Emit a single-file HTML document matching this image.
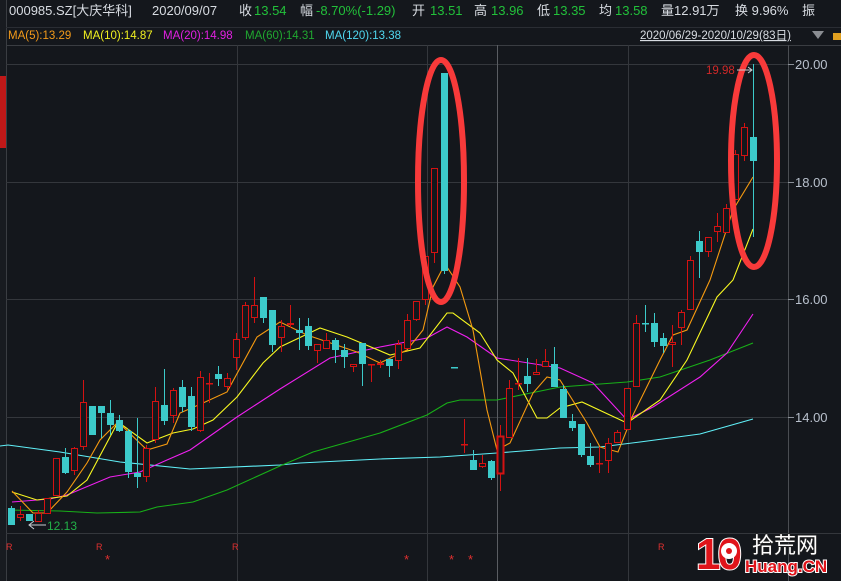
<!DOCTYPE html>
<html><head><meta charset="utf-8">
<style>
html,body{margin:0;padding:0;background:#14171c;width:841px;height:581px;overflow:hidden}
svg{display:block}
text{font-family:"Liberation Sans","Noto Sans CJK SC",sans-serif}
</style></head><body>
<svg id="s" width="841" height="581" viewBox="0 0 841 581" xmlns="http://www.w3.org/2000/svg">
<rect width="841" height="581" fill="#14171c"/>
<rect x="0" y="0" width="6" height="581" fill="#181b20"/>
<rect x="0" y="76" width="6" height="72" fill="#c01818"/>
<line x1="6.5" y1="0" x2="6.5" y2="581" stroke="#3a3d42"/>
<line x1="6" y1="27.5" x2="841" y2="27.5" stroke="#2a2d33"/>
<line x1="6" y1="45.5" x2="841" y2="45.5" stroke="#3a3d42"/>
<g stroke="#34373c" stroke-width="1">
<line x1="6" y1="64.5" x2="788" y2="64.5"/>
<line x1="6" y1="182.5" x2="788" y2="182.5"/>
<line x1="6" y1="299.5" x2="788" y2="299.5"/>
<line x1="6" y1="417.5" x2="788" y2="417.5"/>
<line x1="6" y1="533.5" x2="841" y2="533.5"/>
<line x1="237.5" y1="45" x2="237.5" y2="581"/>
<line x1="427.5" y1="45" x2="427.5" y2="581"/>
<line x1="628.5" y1="45" x2="628.5" y2="581"/>
</g>
<line x1="497.5" y1="45" x2="497.5" y2="581" stroke="#5a5d62"/>
<line x1="788.5" y1="45" x2="788.5" y2="581" stroke="#4a4d52"/>
<g stroke="#8a9098"><line x1="788" y1="64.5" x2="794" y2="64.5"/><line x1="788" y1="182.5" x2="794" y2="182.5"/><line x1="788" y1="299.5" x2="794" y2="299.5"/><line x1="788" y1="417.5" x2="794" y2="417.5"/></g>
<g fill="#b8c0cc" font-size="13">
<text x="795" y="69">20.00</text><text x="795" y="187">18.00</text><text x="795" y="304">16.00</text><text x="795" y="422">14.00</text>
</g>
<g font-size="13" fill="#d8dce2">
<text x="9" y="15">000985.SZ[大庆华科]</text>
<text x="152" y="15">2020/09/07</text>
<text x="239" y="15">收</text><text x="254" y="15" fill="#22c03a">13.54</text>
<text x="300" y="15">幅</text><text x="316" y="15" fill="#22c03a">-8.70%(-1.29)</text>
<text x="412" y="15">开</text><text x="430" y="15" fill="#22c03a">13.51</text>
<text x="474" y="15">高</text><text x="491" y="15" fill="#22c03a">13.96</text>
<text x="537" y="15">低</text><text x="553" y="15" fill="#22c03a">13.35</text>
<text x="599" y="15">均</text><text x="615" y="15" fill="#22c03a">13.58</text>
<text x="661" y="15">量12.91万</text>
<text x="735" y="15">换 9.96%</text>
<text x="802" y="15">振</text>
</g>
<g font-size="11.5">
<text x="8" y="39" fill="#f39a1a">MA(5):13.29</text>
<text x="83" y="39" fill="#f0f020">MA(10):14.87</text>
<text x="163" y="39" fill="#e020e0">MA(20):14.98</text>
<text x="245" y="39" fill="#20a830">MA(60):14.31</text>
<text x="325" y="39" fill="#50d8f0">MA(120):13.38</text>
<text x="640" y="39" fill="#d8dce2" text-decoration="underline">2020/06/29-2020/10/29(83日)</text>
</g>
<polygon points="812,31 824,31 818,39" fill="#8a8d92"/>
<rect x="833" y="33" width="8" height="7" fill="#e0a020"/>
<g fill="none" stroke-width="1.1">
<polyline stroke="#60f0f8" points="0,446 8,445 60,452 120,462 190,469 280,465 300,463 380,459 440,457 497,453 560,448 600,447 640,442 700,434 753,419"/>
<polyline stroke="#18b018" points="8,510 60,511 97,513 140,512 157,507 193,502 227,490 280,466 313,452 380,433 427,415 447,403 460,400 497,400 560,387 627,382 660,377 710,360 753,343"/>
<polyline stroke="#f020f0" points="12,502 50,499 67,495 110,477 140,472 167,460 190,450 237,417 280,389 330,358 380,347 427,338 447,327 467,337 497,358 560,368 593,383 627,420 653,407 700,377 727,353 753,314"/>
<polyline stroke="#f8f820" points="12,492 37,500 67,496 87,480 118,422 147,443 173,433 193,429 213,420 237,397 263,363 280,347 320,328 347,337 390,355 420,348 447,313 453,313 480,333 497,360 513,373 537,418 547,418 560,408 582,402 627,423 660,400 687,360 717,297 733,280 753,229"/>
<polyline stroke="#f59a10" points="12,491 33,513 47,513 67,492 87,463 100,440 118,422 147,450 167,444 180,413 203,403 227,392 257,337 280,322 307,335 357,352 380,363 407,350 423,330 433,287 445,264 460,287 473,330 487,410 497,450 510,443 533,393 547,377 560,380 587,423 600,447 618,452 632,417 660,360 673,335 687,330 710,280 733,210 753,177"/>
</g>
<g id="c"></g>
<ellipse cx="441" cy="181" rx="23" ry="121" fill="none" stroke="#f83a3a" stroke-width="6"/>
<ellipse cx="754" cy="161" rx="23" ry="106" fill="none" stroke="#f83a3a" stroke-width="6"/>
<text x="706" y="74" font-size="11.5" fill="#d02828">19.98</text>
<path d="M737 70 H752 M748 67 L752 70 L748 73" stroke="#c8ccd2" fill="none"/>
<path d="M30 525 H46 M34 521 L29 525 L34 529" stroke="#c8ccd2" fill="none"/>
<text x="47" y="530" font-size="12" fill="#22b048">12.13</text>
<g font-size="9" fill="#e03030">
<text x="6" y="550">R</text><text x="96" y="550">R</text><text x="232" y="550">R</text><text x="658" y="550">R</text>
</g>
<g font-size="13" fill="#e03030">
<text x="105" y="564">*</text><text x="404" y="564">*</text><text x="449" y="564">*</text><text x="468" y="564">*</text>
</g>
<g>
<text x="696" y="569" font-size="44" font-weight="bold" fill="#e0141a" stroke="#fff" stroke-width="2" paint-order="stroke" style="font-family:'Liberation Sans',sans-serif;letter-spacing:-3px">10</text>
<circle cx="729" cy="551" r="8" fill="#fff"/>
<circle cx="729" cy="551" r="3" fill="#e0141a"/>
<text x="752" y="553" font-size="22" fill="#fff" stroke="#222" stroke-width="1.5" paint-order="stroke" style="font-family:'Noto Sans CJK SC',sans-serif">拾荒网</text>
<text x="745" y="572" font-size="17" font-weight="bold" fill="#e0141a" stroke="#fff" stroke-width="2" paint-order="stroke">Huang.CN</text>
</g>
</svg>
<script>
var d=[[8,'c',508,525,506,525],[17,'r',514,518,506,521],[26,'c',514,521,514,521],[35,'r',513,522,510,522],[44,'r',498,514,498,514],[53,'r',458,496,458,496],[62,'c',457,473,448,474],[71,'r',448,471,447,475],[80,'r',402,447,380,450],[89,'c',406,435,406,435],[98,'c',406,413,406,438],[107,'c',413,425,400,435],[116,'c',420,431,415,432],[125,'c',431,472,429,478],[134,'c',473,477,418,488],[143,'r',448,477,445,482],[152,'r',401,440,387,443],[161,'c',405,421,369,425],[170,'r',390,416,388,423],[179,'c',387,407,380,412],[188,'c',396,427,387,431],[197,'r',377,431,371,432],[206,'r',383,383,373,403],[215,'c',374,379,366,386],[224,'r',378,387,373,390],[233,'r',339,358,333,370],[242,'r',305,338,302,340],[251,'r',305,318,277,323],[260,'c',297,318,297,323],[269,'c',310,345,310,352],[278,'r',326,338,320,352],[287,'r',323,325,305,328],[296,'c',330,333,318,350],[305,'c',326,346,318,350],[314,'r',344,351,344,363],[323,'r',340,349,333,349],[332,'c',340,350,338,363],[341,'c',350,357,344,368],[350,'r',364,367,364,372],[359,'c',343,364,343,386],[368,'r',364,364,364,382],[377,'r',363,365,360,368],[386,'c',359,366,359,377],[395,'r',344,361,340,369],[404,'r',320,349,314,349],[413,'r',301,320,301,321],[422,'r',256,300,256,305],[431,'r',168,253,168,263],[441,'c',73,271,73,274],[451,'c',367,368,367,368],[461,'r',444,444,419,453],[470,'c',460,470,450,470],[479,'r',463,467,455,468],[488,'c',461,478,460,480],[497,'r',436,474,425,491],[506,'r',388,438,380,438],[515,'r',383,383,358,390],[524,'c',376,384,358,392],[533,'r',372,375,359,375],[542,'r',361,367,349,367],[551,'c',364,387,347,387],[560,'c',389,418,385,418],[569,'c',421,428,414,431],[578,'c',424,455,424,457],[587,'c',456,465,443,467],[596,'r',463,463,447,473],[605,'r',443,461,438,473],[614,'r',432,443,430,443],[624,'r',388,430,388,430],[633,'r',323,387,315,387],[642,'c',323,323,305,332],[651,'c',323,342,313,347],[660,'c',338,346,333,353],[669,'r',342,345,325,367],[678,'r',312,328,310,345],[687,'r',260,310,256,310],[696,'c',241,252,231,278],[705,'r',237,252,237,257],[714,'r',226,232,213,242],[723,'r',208,233,204,233],[732,'r',154,200,150,200],[741,'r',127,156,123,161],[750,'c',137,161,64,237]];
var h='';d.forEach(function(a){var x=a[0],col=a[1]=='c'?'#3ccaca':'#d41212',cx=x+3.5;
h+='<line x1="'+cx+'" y1="'+a[4]+'" x2="'+cx+'" y2="'+a[5]+'" stroke="'+col+'"/>';
if(a[3]-a[2]<1.5){h+='<rect x="'+x+'" y="'+a[2]+'" width="7" height="1.5" fill="'+col+'"/>';}
else if(a[1]=='c'){h+='<rect x="'+x+'" y="'+a[2]+'" width="7" height="'+(a[3]-a[2])+'" fill="'+col+'"/>';}
else{h+='<rect x="'+(x+0.5)+'" y="'+(a[2]+0.5)+'" width="6" height="'+(a[3]-a[2]-1)+'" fill="#14171c" stroke="'+col+'" stroke-width="'+(x==497?2:1)+'"/>';}});
document.getElementById('c').innerHTML=h;
</script>
</body></html>
